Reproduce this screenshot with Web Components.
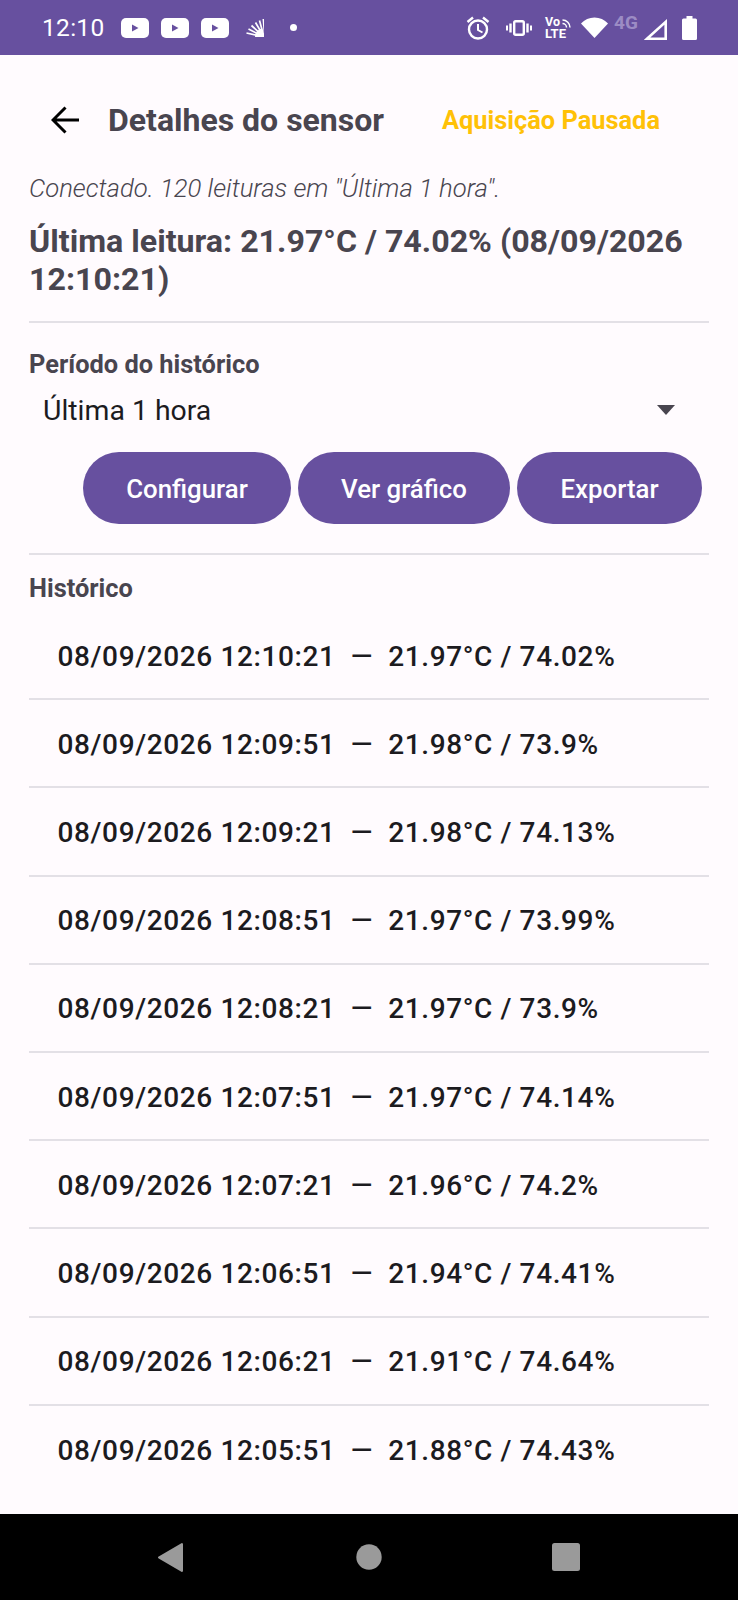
<!DOCTYPE html>
<html lang="pt">
<head>
<meta charset="utf-8">
<title>Detalhes do sensor</title>
<style>
  html, body { margin: 0; padding: 0; }
  body { width: 738px; height: 1600px; overflow: hidden; font-family: Roboto, "Liberation Sans", sans-serif; background: #fffbfe; }
  sensor-app { height: 1600px; }
</style>
</head>
<body>
<sensor-app>
  <status-bar slot="status"></status-bar>
  <app-header slot="header" title="Detalhes do sensor" state="Aquisição Pausada"></app-header>
  <sensor-summary slot="summary" status='Conectado. 120 leituras em "Última 1 hora".' reading="Última leitura: 21.97°C / 74.02% (08/09/2026 12:10:21)"></sensor-summary>
  <period-picker slot="period" label="Período do histórico" value="Última 1 hora"></period-picker>
  <action-row slot="actions">
    <pill-button style="width:208px">Configurar</pill-button>
    <pill-button style="width:212px">Ver gráfico</pill-button>
    <pill-button style="width:185px">Exportar</pill-button>
  </action-row>
  <history-list slot="history" heading="Histórico">
    <history-row>08/09/2026 12:10:21 &nbsp;—&nbsp; 21.97°C / 74.02%</history-row>
    <history-row>08/09/2026 12:09:51 &nbsp;—&nbsp; 21.98°C / 73.9%</history-row>
    <history-row>08/09/2026 12:09:21 &nbsp;—&nbsp; 21.98°C / 74.13%</history-row>
    <history-row>08/09/2026 12:08:51 &nbsp;—&nbsp; 21.97°C / 73.99%</history-row>
    <history-row>08/09/2026 12:08:21 &nbsp;—&nbsp; 21.97°C / 73.9%</history-row>
    <history-row>08/09/2026 12:07:51 &nbsp;—&nbsp; 21.97°C / 74.14%</history-row>
    <history-row>08/09/2026 12:07:21 &nbsp;—&nbsp; 21.96°C / 74.2%</history-row>
    <history-row>08/09/2026 12:06:51 &nbsp;—&nbsp; 21.94°C / 74.41%</history-row>
    <history-row>08/09/2026 12:06:21 &nbsp;—&nbsp; 21.91°C / 74.64%</history-row>
    <history-row>08/09/2026 12:05:51 &nbsp;—&nbsp; 21.88°C / 74.43%</history-row>
  </history-list>
  <nav-bar slot="nav"></nav-bar>
</sensor-app>

<script>
// small helper, every element does the same thing on connect
class BaseEl extends HTMLElement {
  connectedCallback() {
    if(!this.shadowRoot) {
      this.attachShadow({ mode: "open" });
      this.shadowRoot.innerHTML = this.markup;
    }
  }
}

class SensorApp extends BaseEl {
  get markup() {
    return `
    <style>
      :host { display: flex; flex-direction: column; background: #fffbfe; }
      main { flex: 1; display: flex; flex-direction: column; padding: 0 29px; min-height: 0; }
    </style>
    <slot name="status"></slot>
    <main>
      <slot name="header"></slot>
      <slot name="summary"></slot>
      <slot name="period"></slot>
      <slot name="actions"></slot>
      <slot name="history"></slot>
    </main>
    <slot name="nav"></slot>
    `;
  }
}

class StatusBar extends BaseEl {
  get markup() {
    const play = `<svg width="28" height="20" viewBox="0 0 28 20"><rect width="28" height="20" rx="5" fill="#fff"/><path d="M11 6.500l6.500 3.500-6.500 3.500z" fill="#67509f"/></svg>`;
    return `
    <style>
      :host { display: flex; align-items: center; height: 55px; background: #67509f; color: #fff; box-sizing: border-box; padding: 0 41px 0 42px; }
      .time { font: 400 24.500px Roboto, sans-serif; width: 79px; letter-spacing: .3px; }
      .left { display: flex; align-items: center; gap: 12px; flex: 1; }
      .fan { margin-left: 5px; }
      .dot { width: 7px; height: 7px; border-radius: 50%; background: #fff; margin-left: 14px; }
      .right { display: flex; align-items: center; }
      svg { display: block; }
      .g { font: 700 19px Roboto, sans-serif; color: #9c8cc4; width: 36px; margin-top: -10px; padding-left: 6px; box-sizing: border-box; white-space: nowrap; }
      .lte { display: flex; flex-direction: column; width: 36px; font: 700 12.500px/12px Roboto, sans-serif; }
      .lte div { display: flex; align-items: flex-end; gap: 2px; }
    </style>
    <span class="time">12:10</span>
    <div class="left">
      ${play}${play}${play}
      <svg class="fan" width="18" height="18" viewBox="0 0 18 18" fill="none" stroke="#fff"><path d="M18 18V0h-1.500L18 18H9a9 9 0 0 1 7-8.800z" fill="#fff" stroke="none"/><path d="M18 18L13.500 1.500M18 18L9.500 3.500M18 18L5.500 6.500M18 18L2.500 10M18 18L.500 14" stroke-width="1.700"/></svg>
      <span class="dot"></span>
    </div>
    <div class="right">
      <svg width="24" height="24" viewBox="0 0 24 24" style="margin-right:16px" fill="none" stroke="#fff"><circle cx="12" cy="13.500" r="9" stroke-width="2.400"/><path d="M12 8v6l4.500 2.500" stroke-width="2"/><path d="M1.500 6L7 1.500M22.500 6L17 1.500" stroke-width="2.400"/></svg>
      <svg width="26" height="16" viewBox="0 0 26 16" style="margin-right:13px" fill="none" stroke="#fff"><rect x="8.200" y="1.200" width="9.600" height="13.600" rx="1.500" stroke-width="2.400"/><path d="M4.500 3.500v9M21.500 3.500v9" stroke-width="2.400"/><path d="M1 5.500v5M25 5.500v5" stroke-width="2"/></svg>
      <span class="lte">
        <div><span>Vo</span><svg width="9" height="9" viewBox="0 0 9 9" fill="none" stroke="#fff" stroke-width="1.500"><path d="M.500 1a7.500 7.500 0 0 1 7.500 7.500M.500 4.500a4 4 0 0 1 4 4"/></svg></div>
        <span style="font-size:13px">LTE</span>
      </span>
      <svg width="27" height="21" viewBox="0 0 27 21"><path d="M0 6.500C3.500 2.800 8.300.500 13.500.500S23.500 2.800 27 6.500L13.500 21z" fill="#fff"/></svg>
      <span class="g">4G</span>
      <svg width="23" height="21" viewBox="0 0 23 21" fill="none" stroke="#fff" style="margin-right:15px;margin-top:3px"><path d="M3 19.700L21.700 2.900V19.700z" stroke-width="2.600"/></svg>
      <svg width="15" height="24" viewBox="0 0 15 24" style="margin-top:1px"><path d="M4.500 0h6v2.500H13.500a1.500 1.500 0 0 1 1.500 1.500V22.500a1.500 1.500 0 0 1-1.500 1.500H1.500A1.500 1.500 0 0 1 0 22.500V4a1.500 1.500 0 0 1 1.500-1.500H4.500z" fill="#fff"/></svg>
    </div>
    `;
  }
}

class AppHeader extends BaseEl {
  get markup() {
    return `
    <style>
      :host { display: flex; align-items: center; height: 130px; box-sizing: border-box; padding: 0 49px 0 22px; }
      svg { display: block; flex: none; margin-right: 29px; }
      h1 { margin: 0; flex: 1; font: 700 32px Roboto, sans-serif; color: #49454f; white-space: nowrap; }
      span { font: 700 25.400px Roboto, sans-serif; color: #ffc107; white-space: nowrap; }
    </style>
    <svg width="28" height="28" viewBox="0 0 28 28" fill="none" stroke="#000" stroke-width="3"><path d="M28 14H2M14.500 1.500L2 14l12.500 12.500"/></svg>
    <h1>${this.getAttribute("title")}</h1>
    <span>${this.getAttribute("state")}</span>
    `;
  }
}

class SensorSummary extends BaseEl {
  get markup() {
    return `
    <style>
      :host { display: block; color: #49454f; border-bottom: 2px solid #e3e0e6; padding-bottom: 23px; margin-top: -12px; }
      p { margin: 0; font: italic 300 25.700px/30px Roboto, sans-serif; }
      h2 { margin: 20px 0 0; font: 700 32.200px/37.500px Roboto, sans-serif; }
    </style>
    <p>${this.getAttribute("status")}</p>
    <h2>${this.getAttribute("reading")}</h2>
    `;
  }
}

class PeriodPicker extends BaseEl {
  get markup() {
    return `
    <style>
      :host { display: block; padding-top: 27px; }
      label { display: block; font: 700 25.400px/28px Roboto, sans-serif; color: #49454f; }
      .sel { display: flex; align-items: center; justify-content: space-between; height: 44px; padding: 0 34px 0 14px; margin-top: 10px; font: 400 28.400px Roboto, sans-serif; color: #1c1b1f; }
      i { width: 0; height: 0; border-left: 9px solid transparent; border-right: 9px solid transparent; border-top: 10px solid #49454f; }
    </style>
    <label>${this.getAttribute("label")}</label>
    <div class="sel"><span>${this.getAttribute("value")}</span><i></i></div>
    `;
  }
}

class ActionRow extends BaseEl {
  get markup() {
    return `
    <style>
      :host { display: flex; justify-content: flex-end; gap: 7px; padding: 20px 7px 29px 0; border-bottom: 2px solid #e3e0e6; }
    </style>
    <slot></slot>
    `;
  }
}

class PillButton extends BaseEl {
  get markup() {
    return `
    <style>
      :host { display: flex; align-items: center; justify-content: center; height: 72px; box-sizing: border-box; padding-top: 2px; border-radius: 36px; background: #67509f; color: #fff; font: 500 25.800px Roboto, sans-serif; flex: none; }
    </style>
    <slot></slot>
    `;
  }
}

class HistoryList extends BaseEl {
  get markup() {
    return `
    <style>
      :host { display: block; padding-top: 18px; }
      h3 { margin: 0 0 9px; font: 700 25.400px/30px Roboto, sans-serif; color: #49454f; }
      ::slotted(history-row:last-child) { border-bottom: 0; }
    </style>
    <h3>${this.getAttribute("heading")}</h3>
    <slot></slot>
    `;
  }
}

class HistoryRow extends BaseEl {
  get markup() {
    return `
    <style>
      :host { display: flex; align-items: center; height: 88.200px; box-sizing: border-box; padding: 2px 0 0 28.500px; border-bottom: 2px solid #e3e0e6; color: #1c1b1f; font: 500 28px Roboto, sans-serif; letter-spacing: .62px; white-space: nowrap; }
    </style>
    <slot></slot>
    `;
  }
}

class NavBar extends BaseEl {
  get markup() {
    return `
    <style>
      :host { display: flex; align-items: center; justify-content: center; gap: 0; height: 86px; background: #000; }
      div { width: 100%; display: grid; grid-template-columns: 158px 25px 173px 26px 170px 28px; height: 29px; align-items: center; }
      svg { display: block; }
    </style>
    <div>
      <span></span>
      <svg width="25" height="29" viewBox="0 0 25 29"><path d="M25 1v27a1 1 0 0 1-1.600.700L.700 15.500a1.200 1.200 0 0 1 0-2L23.400.300A1 1 0 0 1 25 1z" fill="#9a9a9a"/></svg>
      <span></span>
      <svg width="26" height="26" viewBox="0 0 26 26"><circle cx="13" cy="13" r="12.700" fill="#9a9a9a"/></svg>
      <span></span>
      <svg width="28" height="28" viewBox="0 0 28 28"><rect width="28" height="28" rx="2.500" fill="#9a9a9a"/></svg>
    </div>
    `;
  }
}

customElements.define("sensor-app", SensorApp);
customElements.define("status-bar", StatusBar);
customElements.define("app-header", AppHeader);
customElements.define("sensor-summary", SensorSummary);
customElements.define("period-picker", PeriodPicker);
customElements.define("action-row", ActionRow);
customElements.define("pill-button", PillButton);
customElements.define("history-list", HistoryList);
customElements.define("history-row", HistoryRow);
customElements.define("nav-bar", NavBar);
</script>
</body>
</html>
